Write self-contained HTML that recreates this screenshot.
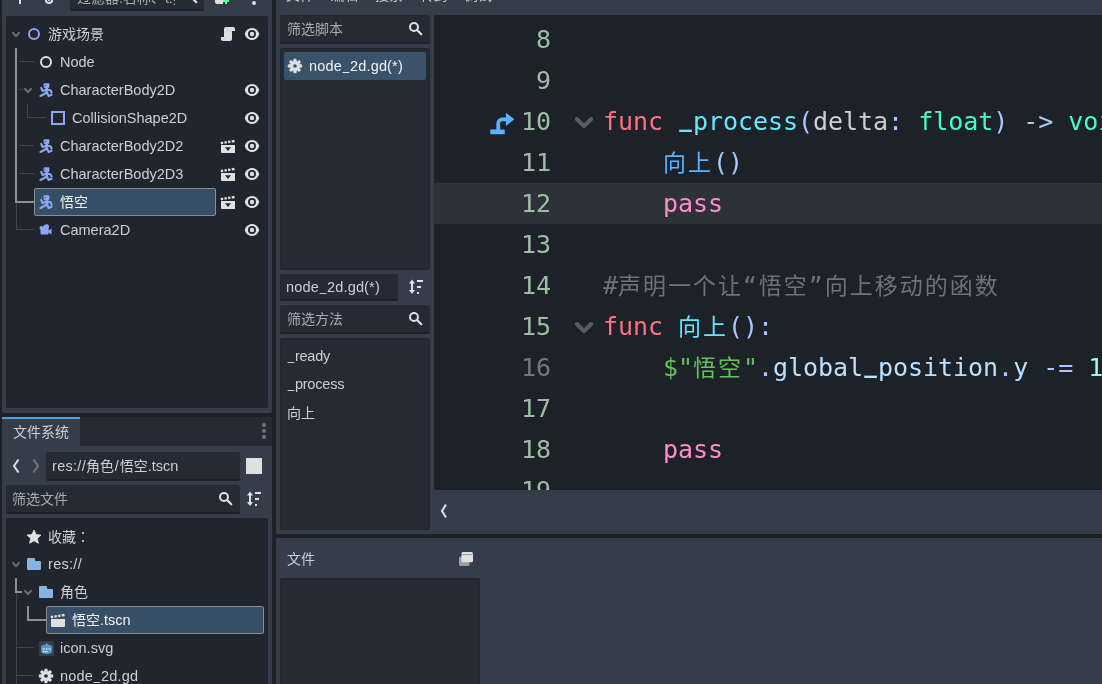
<!DOCTYPE html>
<html lang="zh-CN">
<head>
<meta charset="utf-8">
<title>Godot</title>
<style>
html,body{margin:0;padding:0;}
html,body{background:#1d2229;overflow:hidden;}
body{width:1102px;height:684px;}
#app{will-change:transform;width:1102px;height:684px;overflow:hidden;background:#1d2229;position:relative;
 font-family:"Liberation Sans","Noto Sans CJK SC",sans-serif;font-size:14px;color:#cdcfd2;}
.abs{position:absolute;}
.panel{position:absolute;background:#363d4a;}
.tree{position:absolute;background:#21262e;border-radius:2px;}
.list{position:absolute;background:#252b34;border:1px solid #21262e;box-sizing:border-box;border-radius:2px;}
.edit{position:absolute;background:#252b34;border-radius:2px;border-bottom:2px solid #1d2229;box-sizing:border-box;}
.t{position:absolute;white-space:nowrap;line-height:20px;height:20px;color:#cdcfd2;}
.la{font-size:14.5px}
.ph{color:#a8aaae;}
.ic{position:absolute;width:16px;height:16px;}
.sel{position:absolute;background:#374f66;border:1px solid #858d97;border-radius:2px;box-sizing:border-box;}
.ln1{position:absolute;background:#3f444c;}
.ln2{position:absolute;background:#8d9095;}
.code{position:absolute;letter-spacing:-0.05px;font-family:"DejaVu Sans Mono","Liberation Mono","Noto Sans CJK SC",monospace;font-size:25px;line-height:41px;height:41px;white-space:pre;color:#cdcfd2;}
.num{position:absolute;font-family:"DejaVu Sans Mono","Liberation Mono",monospace;font-size:25px;line-height:41px;height:41px;width:60px;text-align:right;color:#9ebda4;}
.cj{font-size:23px;letter-spacing:2px}
.u{display:inline-block;position:relative;top:-1.500px;transform:scaleX(.8)}
.us{display:inline-block;position:relative;top:-4.200px;font-weight:bold;transform:scaleX(.84)}
.uns{color:#74777c}
.kw{color:#ff7085}.cf{color:#ff8ccc}.fn{color:#66e6ff}.call{color:#57b3ff}.ty{color:#42ffc2}.sy{color:#abc9ff}
.cm{color:#6f7277}.np{color:#63c259}.mv{color:#bce0ff}.nm{color:#a1ffe0}
</style>
</head>
<body>
<div id="app">
<svg width="0" height="0" style="position:absolute">
<defs>
<g id="i-node2d"><circle cx="8" cy="8" r="5" fill="none" stroke="#8da5f3" stroke-width="2"/></g>
<g id="i-node"><circle cx="8" cy="8" r="5" fill="none" stroke="#e0e0e0" stroke-width="2"/></g>
<g id="i-char" fill="none" stroke="#8da5f3" stroke-linecap="round" stroke-linejoin="round">
 <rect x="5.6" y="1.2" width="5.8" height="4.8" rx="1" fill="#8da5f3" stroke="none"/>
 <rect x="6.4" y="3" width="1.3" height="1.2" fill="#56679f" stroke="none"/>
 <line x1="8.800" y1="6" x2="8.800" y2="11" stroke-width="2.700"/>
 <polyline points="3.200,5.900 4.600,9 8,7.800" stroke-width="2.100"/>
 <polyline points="9.500,7.800 12.600,8.300 13.600,10.600" stroke-width="2.100"/>
 <line x1="8.500" y1="10.800" x2="2.500" y2="14" stroke-width="2.100"/>
 <polyline points="9.200,10.800 10.600,14 13.600,12.800" stroke-width="2.100"/>
</g>
<g id="i-coll"><rect x="2" y="2" width="12" height="12" fill="none" stroke="#8da5f3" stroke-width="2"/></g>
<g id="i-cam"><path transform="translate(-1.500 0.600)" d="m9.5 2a3 3 0 0 0 -2.9102 2.2812 2 2 0 0 0 -1.5898-.78125 2 2 0 0 0 -2 2 2 2 0 0 0 1 1.7305v3.7695c0 .554.446 1 1 1h6c.554 0 1-.446 1-1v-1l3 2v-6l-3 2v-1.7695a3 3 0 0 0 .5-1.7305 3 3 0 0 0 -3-3z" fill="#8da5f3"/></g>
<g id="i-script"><path d="M6 1h7a2 2 0 0 1 2 2v2h-3v8a2 2 0 0 1-2 2H3a2 2 0 0 1-2-2v-2h3V3a2 2 0 0 1 2-2z" fill="#e0e0e0"/><path d="M7 1.6v3.6h5" fill="none" stroke="#c4c6c9" stroke-width="0.8"/><path d="M4.2 11v2.2a1 1 0 0 1-1 1" fill="none" stroke="#c4c6c9" stroke-width="0.8"/></g>
<g id="i-eye"><path fill-rule="evenodd" fill="#e0e0e0" d="M8 2C4.700 2 1.900 4.300 .900 7.500a1.600 1.600 0 0 0 0 1C1.900 11.700 4.700 14 8 14s6.100-2.300 7.100-5.500a1.600 1.600 0 0 0 0-1C14.100 4.300 11.300 2 8 2zm0 2a4 4 0 0 1 0 8 4 4 0 0 1 0-8zm0 1.800a2.200 2.200 0 0 0 0 4.400 2.200 2.200 0 0 0 0-4.400z"/></g>
<g id="i-inst"><path fill="#e0e0e0" fill-rule="evenodd" d="M1 7h14v8H2a1 1 0 0 1-1-1zM5 9.300l3 3.700 3-3.700z"/>
 <g fill="#e0e0e0" transform="rotate(-9 8 4)"><rect x="0.700" y="2.800" width="2.400" height="2.400"/><rect x="4.400" y="2.800" width="2.400" height="2.400"/><rect x="8.100" y="2.800" width="2.400" height="2.400"/><rect x="11.800" y="2.800" width="2.800" height="2.400"/></g></g>
<g id="i-scene"><path fill="#e0e0e0" d="M1 7h14v7a1 1 0 0 1-1 1H2a1 1 0 0 1-1-1z"/>
 <g fill="#e0e0e0" transform="rotate(-9 8 4)"><rect x="0.700" y="2.800" width="2.400" height="2.400"/><rect x="4.400" y="2.800" width="2.400" height="2.400"/><rect x="8.100" y="2.800" width="2.400" height="2.400"/><rect x="11.800" y="2.800" width="2.800" height="2.400"/></g></g>
<g id="i-search"><circle cx="7" cy="6" r="4" fill="none" stroke="#e0e0e0" stroke-width="2"/><path d="M10 9 14.300 13.300" stroke="#e0e0e0" stroke-width="2.200" stroke-linecap="round"/></g>
<g id="i-sort" fill="#e0e0e0"><path d="M4 .500 7 4.500H5V11h2L4 15 1 11h2V4.500H1z"/><rect x="9" y="1" width="6" height="2"/><rect x="9" y="7" width="4" height="2"/><rect x="9" y="13" width="2" height="2"/></g>
<g id="i-star"><path transform="translate(0 .8)" fill="#e0e0e0" d="M8 1.200 10.100 5.800 15 6.300 11.300 9.600 12.400 14.500 8 12 3.600 14.500 4.700 9.600 1 6.300 5.900 5.800z" stroke="#e0e0e0" stroke-width="0.800" stroke-linejoin="round"/></g>
<g id="i-folder"><path fill="#87b3e0" d="M2 2a1 1 0 0 0-1 1v10a1 1 0 0 0 1 1h12a1 1 0 0 0 1-1V6a1 1 0 0 0-1-1h-4a1 1 0 0 1-1-1v-1a1 1 0 0 0-1-1z"/></g>
<g id="i-gear"><path fill="#e0e0e0" fill-rule="evenodd" stroke="#e0e0e0" stroke-width="0.6" stroke-linejoin="round" d="M6.61 3.20 L6.85 1.09 L9.15 1.09 L9.39 3.20 L10.41 3.62 L12.07 2.30 L13.70 3.93 L12.38 5.59 L12.80 6.61 L14.91 6.85 L14.91 9.15 L12.80 9.39 L12.38 10.41 L13.70 12.07 L12.07 13.70 L10.41 12.38 L9.39 12.80 L9.15 14.91 L6.85 14.91 L6.61 12.80 L5.59 12.38 L3.93 13.70 L2.30 12.07 L3.62 10.41 L3.20 9.39 L1.09 9.15 L1.09 6.85 L3.20 6.61 L3.62 5.59 L2.30 3.93 L3.93 2.30 L5.59 3.62zM8 5.900a2.100 2.100 0 0 1 0 4.200 2.100 2.100 0 0 1 0-4.200z"/></g>
<g id="i-godot"><rect x="1" y="1" width="15" height="15" rx="1.500" fill="#363d4a"/><path fill="#4a9cc8" d="M3.200 8.300 3 5.400 4.600 6 5.400 4.300 7 5 8 3.300h1.400L10.300 5l1.600-.700.800 1.700 1.600-.600-.200 2.900v3.200c0 1.500-2.400 2.500-5.450 2.500s-5.450-1-5.450-2.500z"/><rect x="4.700" y="8.200" width="2" height="1.700" fill="#fff"/><rect x="10.600" y="8.200" width="2" height="1.700" fill="#fff"/><rect x="8.100" y="8.200" width="1.100" height="1.700" fill="#e8f2f8"/><rect x="5.500" y="8.600" width=".9" height="1" fill="#414042"/><rect x="11.300" y="8.600" width=".9" height="1" fill="#414042"/><rect x="4.600" y="11.100" width="1.300" height="1.100" fill="#fff"/><rect x="6.600" y="11.100" width="1.300" height="1.100" fill="#fff"/><rect x="8.500" y="11.100" width="1.300" height="1.100" fill="#fff"/></g>
<g id="i-add"><path fill="#e0e0e0" d="M7 1v6H1v2h6v6h2V9h6V7H9V1z"/></g>
<g id="i-link"><circle cx="8" cy="11" r="3.100" fill="none" stroke="#e0e0e0" stroke-width="2"/><circle cx="8" cy="11" r="1.100" fill="#e0e0e0"/></g>
<g id="i-sadd"><path d="M6 1h5a2 2 0 0 1 2 2v2h-3v4h-1v4H3a2 2 0 0 1-2-2v-2h3V3a2 2 0 0 1 2-2z" fill="#e0e0e0" transform="translate(0 2)"/><path fill="#5fff97" d="M11 9v2H9v2h2v2h2v-2h2v-2h-2V9z"/></g>
<g id="i-win"><rect x="1" y="5.500" width="10.500" height="9.500" rx="1.500" fill="#9a9d9f"/><rect x="3.500" y="1" width="11.500" height="10.200" rx="1.500" fill="#e0e0e0"/><rect x="4" y="3" width="10.500" height="1" fill="#9a9da0"/></g>
<g id="i-chev"><polyline points="5,6.800 8,10.100 11,6.800" fill="none" stroke="#6d7278" stroke-width="2" stroke-linecap="round" stroke-linejoin="round"/></g>
</defs></svg>

<!-- ===== left top dock : scene tree ===== -->
<div class="panel" style="left:2px;top:-10px;width:270px;height:423px;border-radius:2px;"></div>
<div class="edit" style="left:70px;top:-18px;width:134px;height:29px;"></div>
<div class="tree" id="scenetree" style="left:6px;top:16px;width:262px;height:392px;">
<div class="sel" style="left:28px;top:172px;width:182px;height:28px;"></div>
<div class="ln1" style="left:13px;top:45px;width:15px;height:1px"></div>
<div class="ln1" style="left:13px;top:73px;width:4px;height:1px"></div>
<div class="ln1" style="left:21px;top:88px;width:1px;height:14px"></div>
<div class="ln1" style="left:21px;top:101px;width:19px;height:1px"></div>
<div class="ln1" style="left:13px;top:129px;width:15px;height:1px"></div>
<div class="ln1" style="left:13px;top:157px;width:15px;height:1px"></div>
<div class="ln1" style="left:10px;top:187px;width:1px;height:27px"></div>
<div class="ln1" style="left:10px;top:213px;width:18px;height:1px"></div>
<div class="ln2" style="left:9px;top:32px;width:2px;height:155px"></div>
<div class="ln2" style="left:9px;top:185px;width:19px;height:2px"></div>
<svg class="ic" style="left:2px;top:10px" viewBox="0 0 16 16"><use href="#i-chev"/></svg>
<svg class="ic" style="left:20px;top:10px" viewBox="0 0 16 16"><use href="#i-node2d"/></svg>
<div class="t" style="left:42px;top:8px;">游戏场景</div>
<svg class="ic" style="left:238px;top:10px" viewBox="0 0 16 16"><use href="#i-eye"/></svg>
<svg class="ic" style="left:214px;top:10px" viewBox="0 0 16 16"><use href="#i-script"/></svg>
<svg class="ic" style="left:32px;top:38px" viewBox="0 0 16 16"><use href="#i-node"/></svg>
<div class="t la" style="left:54px;top:36px;">Node</div>
<svg class="ic" style="left:14px;top:66px" viewBox="0 0 16 16"><use href="#i-chev"/></svg>
<svg class="ic" style="left:32px;top:66px" viewBox="0 0 16 16"><use href="#i-char"/></svg>
<div class="t la" style="left:54px;top:64px;">CharacterBody2D</div>
<svg class="ic" style="left:238px;top:66px" viewBox="0 0 16 16"><use href="#i-eye"/></svg>
<svg class="ic" style="left:44px;top:94px" viewBox="0 0 16 16"><use href="#i-coll"/></svg>
<div class="t la" style="left:66px;top:92px;">CollisionShape2D</div>
<svg class="ic" style="left:238px;top:94px" viewBox="0 0 16 16"><use href="#i-eye"/></svg>
<svg class="ic" style="left:32px;top:122px" viewBox="0 0 16 16"><use href="#i-char"/></svg>
<div class="t la" style="left:54px;top:120px;">CharacterBody2D2</div>
<svg class="ic" style="left:238px;top:122px" viewBox="0 0 16 16"><use href="#i-eye"/></svg>
<svg class="ic" style="left:214px;top:122px" viewBox="0 0 16 16"><use href="#i-inst"/></svg>
<svg class="ic" style="left:32px;top:150px" viewBox="0 0 16 16"><use href="#i-char"/></svg>
<div class="t la" style="left:54px;top:148px;">CharacterBody2D3</div>
<svg class="ic" style="left:238px;top:150px" viewBox="0 0 16 16"><use href="#i-eye"/></svg>
<svg class="ic" style="left:214px;top:150px" viewBox="0 0 16 16"><use href="#i-inst"/></svg>
<svg class="ic" style="left:32px;top:178px" viewBox="0 0 16 16"><use href="#i-char"/></svg>
<div class="t" style="left:54px;top:176px;color:#f2f2f2">悟空</div>
<svg class="ic" style="left:238px;top:178px" viewBox="0 0 16 16"><use href="#i-eye"/></svg>
<svg class="ic" style="left:214px;top:178px" viewBox="0 0 16 16"><use href="#i-inst"/></svg>
<svg class="ic" style="left:32px;top:206px" viewBox="0 0 16 16"><use href="#i-cam"/></svg>
<div class="t la" style="left:54px;top:204px;">Camera2D</div>
<svg class="ic" style="left:238px;top:206px" viewBox="0 0 16 16"><use href="#i-eye"/></svg>
</div>

<!-- ===== left bottom dock : filesystem ===== -->
<div class="abs" style="left:2px;top:417px;width:270px;height:29px;background:#252b34;border-radius:2px 3px 0 0;"></div>
<div class="panel" style="left:2px;top:446px;width:270px;height:250px;"></div>
<div class="abs" style="left:2px;top:417px;width:78px;height:30px;background:#363d4a;border-top:2px solid #569eda;box-sizing:border-box;"></div>
<div class="t" style="left:13px;top:422px;">文件系统</div>
<div class="edit" style="left:46px;top:452px;width:194px;height:29px;"></div>
<div class="t" style="left:52px;top:456px;"><span class="la" style="letter-spacing:0.3px">res://</span>角色<span class="la" style="padding:0 0.8px">/</span>悟空<span class="la">.tscn</span></div>
<div class="edit" style="left:6px;top:485px;width:234px;height:29px;"></div>
<div class="t ph" style="left:12px;top:489px;">筛选文件</div>
<div class="tree" id="fstree" style="left:6px;top:518px;width:262px;height:180px;">
<div class="sel" style="left:40px;top:88px;width:218px;height:28px;"></div>
<div class="ln1" style="left:10px;top:75px;width:1px;height:100px"></div>
<div class="ln1" style="left:10px;top:129px;width:18px;height:1px"></div>
<div class="ln1" style="left:10px;top:157px;width:18px;height:1px"></div>
<div class="ln2" style="left:9px;top:60px;width:2px;height:15px"></div>
<div class="ln2" style="left:9px;top:73px;width:7px;height:2px"></div>
<div class="ln2" style="left:21px;top:88px;width:2px;height:15px"></div>
<div class="ln2" style="left:21px;top:101px;width:19px;height:2px"></div>
<svg class="ic" style="left:20px;top:10px" viewBox="0 0 16 16"><use href="#i-star"/></svg>
<div class="t" style="left:42px;top:8px;">收藏<span lang="ja" style="font-family:'Noto Sans CJK JP',sans-serif">：</span></div>
<svg class="ic" style="left:2px;top:38px" viewBox="0 0 16 16"><use href="#i-chev"/></svg>
<svg class="ic" style="left:20px;top:38px" viewBox="0 0 16 16"><use href="#i-folder"/></svg>
<div class="t la" style="left:42px;top:36px;letter-spacing:0.3px">res://</div>
<svg class="ic" style="left:14px;top:66px" viewBox="0 0 16 16"><use href="#i-chev"/></svg>
<svg class="ic" style="left:32px;top:66px" viewBox="0 0 16 16"><use href="#i-folder"/></svg>
<div class="t" style="left:54px;top:64px;">角色</div>
<svg class="ic" style="left:44px;top:94px" viewBox="0 0 16 16"><use href="#i-scene"/></svg>
<div class="t" style="left:66px;top:92px;color:#f2f2f2">悟空<span class="la">.tscn</span></div>
<svg class="ic" style="left:32px;top:122px" viewBox="0 0 16 16"><use href="#i-godot"/></svg>
<div class="t la" style="left:54px;top:120px;">icon.svg</div>
<svg class="ic" style="left:32px;top:150px" viewBox="0 0 16 16"><use href="#i-gear"/></svg>
<div class="t la" style="letter-spacing:0.15px;left:54px;top:148px;">node<span class="u">_</span>2d.gd</div>
</div>

<!-- ===== center : script editor ===== -->
<div class="panel" style="left:276px;top:-10px;width:830px;height:544px;border-radius:2px;"></div>
<div class="edit" style="left:280px;top:15px;width:150px;height:29px;"></div>
<div class="t ph" style="left:287px;top:19px;">筛选脚本</div>
<div class="list" style="left:280px;top:48px;width:150px;height:222px;"></div>
<div class="edit" style="left:280px;top:274px;width:118px;height:27px;"></div>
<div class="t la" style="letter-spacing:0.15px;left:286px;top:277px;">node<span class="u">_</span>2d.gd(*)</div>
<div class="edit" style="left:280px;top:305px;width:150px;height:29px;"></div>
<div class="t ph" style="left:287px;top:309px;">筛选方法</div>
<div class="list" style="left:280px;top:338px;width:150px;height:192px;"></div>
<div class="t la" style="left:287px;top:346px;letter-spacing:-0.2px"><span class="u">_</span>ready</div>
<div class="t la" style="left:287px;top:374px;letter-spacing:-0.2px"><span class="u">_</span>process</div>
<div class="t" style="left:287px;top:403px;">向上</div>

<!-- code editor -->
<div class="abs" id="code" style="left:434px;top:15px;width:680px;height:475px;background:#1d2229;border-radius:2px 0 0 3px;overflow:hidden;">
<div class="abs" style="left:0;top:168px;width:680px;height:41px;background:#2d3138;"></div>
<div class="num" style="left:57px;top:4px;">8</div>
<div class="num" style="left:57px;top:45px;">9</div>
<div class="num" style="left:57px;top:86px;">10</div>
<div class="code" style="left:169px;top:86px;"><span class="kw">func</span> <span class="fn"><span class="us">_</span>process</span><span class="sy">(</span>delta<span class="sy">:</span> <span class="ty">float</span><span class="sy">)</span> <span class="sy">-&gt;</span> <span class="ty">void</span><span class="sy">:</span></div>
<div class="num" style="left:57px;top:127px;">11</div>
<div class="code" style="left:169px;top:127px;">    <span class="call cj">向上</span><span class="sy">()</span></div>
<div class="num" style="left:57px;top:168px;">12</div>
<div class="code" style="left:169px;top:168px;">    <span class="cf">pass</span></div>
<div class="num" style="left:57px;top:209px;">13</div>
<div class="num" style="left:57px;top:250px;">14</div>
<div class="code" style="left:169px;top:250px;"><span class="cm">#<span class="cj">声明一个让“悟空”向上移动的函数</span></span></div>
<div class="num" style="left:57px;top:291px;">15</div>
<div class="code" style="left:169px;top:291px;"><span class="kw">func</span> <span class="fn cj">向上</span><span class="sy">():</span></div>
<div class="num uns" style="left:57px;top:332px;">16</div>
<div class="code" style="left:169px;top:332px;">    <span class="np">$"<span class="cj">悟空</span>"</span><span class="sy">.</span><span class="mv">global<span class="us">_</span>position</span><span class="sy">.</span><span class="mv">y</span> <span class="sy">-=</span> <span class="nm">10</span></div>
<div class="num" style="left:57px;top:373px;">17</div>
<div class="num" style="left:57px;top:414px;">18</div>
<div class="code" style="left:169px;top:414px;">    <span class="cf">pass</span></div>
<div class="num" style="left:57px;top:455px;">19</div>
<svg class="abs" style="left:0;top:0;" width="680" height="475" viewBox="434 15 680 475">
<g fill="none" stroke="#575b62" stroke-width="4" stroke-linecap="round" stroke-linejoin="round">
<polyline points="576.8,119 584,126.2 591.2,119"/>
<polyline points="576.8,324 584,331.2 591.2,324"/>
</g>
<g transform="translate(490.3 110.3) scale(2.4)" fill="#57b3ff">
<path d="M0 8h6v2H0z M2.5 8V5.5A2.5 2.5 0 0 1 5 3h1.5V1L10 3.75 6.5 6.5V4.6H5a0.9 0.9 0 0 0-0.9 0.9V8z"/>
</g>
</svg>
</div>

<!-- ===== bottom panel ===== -->
<div class="panel" style="left:276px;top:538px;width:830px;height:160px;border-radius:2px;"></div>
<div class="t" style="left:287px;top:549px;">文件</div>
<div class="list" style="left:280px;top:578px;width:200px;height:120px;"></div>

<svg class="ic" style="left:12px;top:-11px" viewBox="0 0 16 16"><use href="#i-add"/></svg>
<svg class="ic" style="left:41px;top:-11px" viewBox="0 0 16 16"><use href="#i-link"/></svg>
<div class="abs" style="left:77px;top:-12px;width:98px;height:20px;overflow:hidden;"><div class="t ph" style="left:0;top:0;">过滤器:名称、t:类型、g:分组</div></div>
<svg class="ic" style="left:182px;top:-11px" viewBox="0 0 16 16"><use href="#i-search"/></svg>
<svg class="ic" style="left:214px;top:-11px" viewBox="0 0 16 16"><use href="#i-sadd"/></svg>
<div class="abs" style="left:252px;top:1px;width:4px;height:4px;border-radius:2px;background:#e0e0e0;"></div>
<div class="t" style="left:286.0px;top:-15px;">文件</div>
<div class="t" style="left:330.5px;top:-15px;">编辑</div>
<div class="t" style="left:375.0px;top:-15px;">搜索</div>
<div class="t" style="left:419.5px;top:-15px;">转到</div>
<div class="t" style="left:464.0px;top:-15px;">调试</div>
<div class="abs" style="left:262px;top:423px;width:4px;height:4px;border-radius:2px;background:#72777f;"></div>
<div class="abs" style="left:262px;top:429px;width:4px;height:4px;border-radius:2px;background:#72777f;"></div>
<div class="abs" style="left:262px;top:435px;width:4px;height:4px;border-radius:2px;background:#72777f;"></div>
<svg class="abs" style="left:8px;top:456px" width="36" height="20" viewBox="0 0 36 20"><polyline points="10.500,3.500 6,10 10.500,16.500" fill="none" stroke="#e0e0e0" stroke-width="2"/><polyline points="25.500,3.500 30,10 25.500,16.500" fill="none" stroke="#6f757d" stroke-width="2"/></svg>
<div class="abs" style="left:246px;top:458px;width:16px;height:16px;background:#e0e0e0;"></div>
<svg class="ic" style="left:217px;top:491px" viewBox="0 0 16 16"><use href="#i-search"/></svg>
<svg class="ic" style="left:246px;top:491px" viewBox="0 0 16 16"><use href="#i-sort"/></svg>
<svg class="ic" style="left:407px;top:21px" viewBox="0 0 16 16"><use href="#i-search"/></svg>
<svg class="ic" style="left:408px;top:279px" viewBox="0 0 16 16"><use href="#i-sort"/></svg>
<svg class="ic" style="left:407px;top:311px" viewBox="0 0 16 16"><use href="#i-search"/></svg>
<div class="abs" style="left:284px;top:52px;width:142px;height:28px;background:#3a526a;border-radius:2px;"></div>
<svg class="ic" style="left:287px;top:58px" viewBox="0 0 16 16"><use href="#i-gear"/></svg>
<div class="t la" style="letter-spacing:0.15px;left:309px;top:56px;color:#f2f2f2">node<span class="u">_</span>2d.gd(*)</div>
<svg class="abs" style="left:436px;top:500px" width="16" height="22" viewBox="0 0 16 22"><polyline points="10,4.500 6,11 10,17.500" fill="none" stroke="#e0e0e0" stroke-width="2"/></svg>
<svg class="ic" style="left:458px;top:551px" viewBox="0 0 16 16"><use href="#i-win"/></svg>
</div>
</body>
</html>
